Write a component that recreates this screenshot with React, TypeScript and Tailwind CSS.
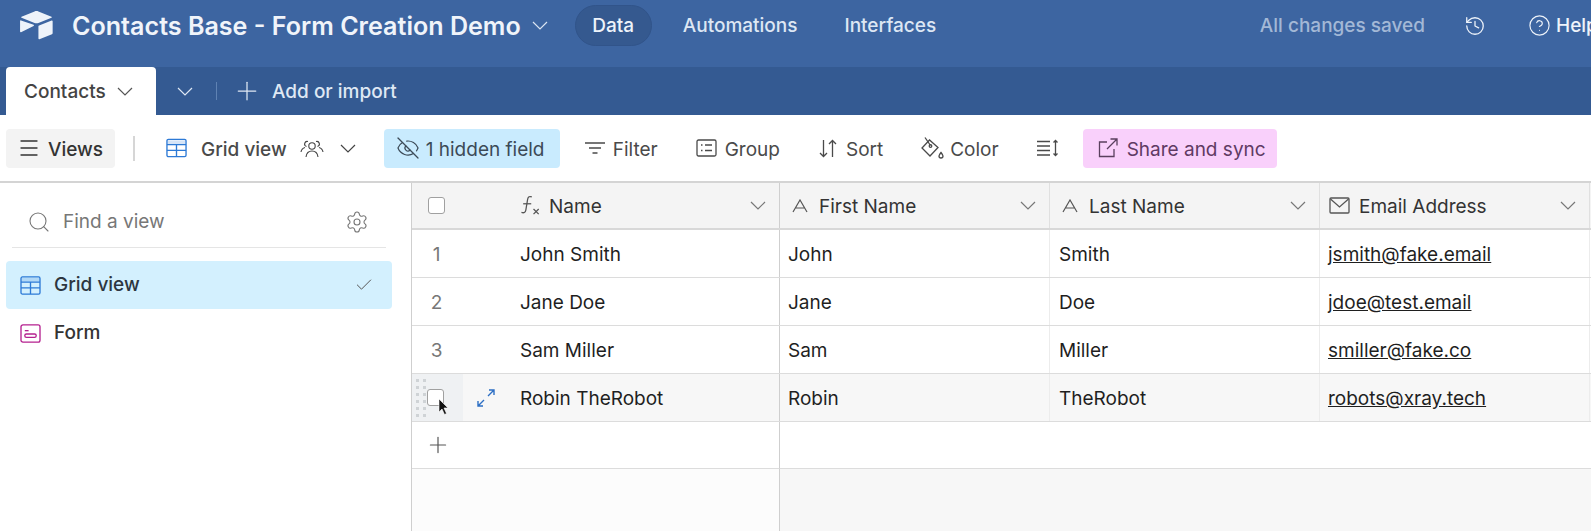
import React from 'react';
import { Plus, Check, Search, Settings, History, CircleHelp, Menu, EyeOff } from 'lucide-react';

const Chev = ({ className }: { className?: string }) => (
  <svg viewBox="0 0 16 9" className={`w-[16px] h-[9px] shrink-0 ${className ?? ''}`} fill="none" stroke="currentColor" strokeWidth="1.2">
    <path d="M1 1l7 7 7-7" />
  </svg>
);

const GridIcon = ({ className }: { className?: string }) => (
  <svg viewBox="0 0 22 20" className={className} fill="none" stroke="currentColor" strokeWidth="1.4">
    <rect x="1" y="1" width="20" height="18" rx="1.5" />
    <path d="M1 6.500h20M1 12.500h20M11 6.500V19" />
    <path d="M1.500 2h19v4h-19z" fill="currentColor" fillOpacity=".2" stroke="none" />
  </svg>
);

const FormIcon = () => (
  <svg viewBox="0 0 22 20" className="w-[21px] h-[19px] text-[#b5208f]" fill="none" stroke="currentColor" strokeWidth="1.4">
    <rect x="1" y="1" width="20" height="18" rx="2" />
    <path d="M5 7h4" />
    <rect x="5" y="10.500" width="12" height="3.500" rx="1.700" />
  </svg>
);

const PeopleIcon = () => (
  <svg viewBox="0 0 24 20" className="w-[24px] h-[20px] text-[#444]" fill="none" stroke="currentColor" strokeWidth="1.1">
    <circle cx="12" cy="8" r="3.200" />
    <path d="M6 19c.5-4 3-6 6-6s5.500 2 6 6" />
    <path d="M8 3.500a2.600 2.600 0 1 0-1.500 5M1 14c.4-2.500 2-4 4-4.500" />
    <path d="M16 3.500a2.600 2.600 0 1 1 1.500 5M23 14c-.4-2.500-2-4-4-4.500" />
  </svg>
);

const FilterIcon = () => (
  <svg viewBox="0 0 22 14" className="w-[22px] h-[14px]" fill="none" stroke="currentColor" strokeWidth="1.3">
    <path d="M1 2h20M5 7h12M8.500 12h5" />
  </svg>
);

const GroupIcon = () => (
  <svg viewBox="0 0 21 18" className="w-[21px] h-[18px]" fill="none" stroke="currentColor" strokeWidth="1.3">
    <rect x="1" y="1" width="19" height="16" rx="1.500" />
    <path d="M5 6h1.500M9 6h7M5 11.500h1.500M9 11.500h7" />
  </svg>
);

const SortIcon = () => (
  <svg viewBox="0 0 18 19" className="w-[18px] h-[19px]" fill="none" stroke="currentColor" strokeWidth="1.3">
    <path d="M4.500 1v16.500M1 14l3.500 3.500L8 14" />
    <path d="M13.500 18V1.500M10 5l3.500-3.500L17 5" />
  </svg>
);

const ColorIcon = () => (
  <svg viewBox="0 0 24 24" className="w-[24px] h-[24px]" fill="none" stroke="currentColor" strokeWidth="1.3">
    <path d="M9.500 4 2 12l8 8 8-8.500z" />
    <path d="M5 1.500l5.500 8" />
    <circle cx="10.500" cy="10" r="1.300" />
    <path d="M21 16.500c1.500 1.900 2 2.600 2 3.500a2 2 0 0 1-4 0c0-.9.500-1.600 2-3.500z" />
  </svg>
);

const RowHeightIcon = () => (
  <svg viewBox="0 0 23 18" className="w-[23px] h-[18px]" fill="none" stroke="currentColor" strokeWidth="1.3">
    <path d="M1 2.500h13M1 7h13M1 11.500h13M1 16h13" />
    <path d="M19.500 1.500v15M17.500 3.500l2-2 2 2M17.500 14.500l2 2 2-2" />
  </svg>
);

const ShareIcon = () => (
  <svg viewBox="0 0 20 20" className="w-[20px] h-[20px] text-[#5a3f5e]" fill="none" stroke="currentColor" strokeWidth="1.3">
    <path d="M9 4H1.500v14.500H16V11" />
    <path d="M9 11 19 1M12.500 1H19v6.500" />
  </svg>
);

const TextIcon = () => (
  <svg viewBox="0 0 16 14" className="w-[16px] h-[14px] ml-[3px] text-[#555]" fill="none" stroke="currentColor" strokeWidth="1.2">
    <path d="M1 13 8 1l7 12M3.500 9h9" />
  </svg>
);

const MailIcon = () => (
  <svg viewBox="0 0 21 17" className="w-[21px] h-[17px] text-[#555]" fill="none" stroke="currentColor" strokeWidth="1.3">
    <rect x="1" y="1" width="19" height="15" rx="1" />
    <path d="M1.500 2l9 8 9-8" />
  </svg>
);

const FormulaIcon = () => (
  <svg viewBox="0 0 20 20" className="w-[23px] h-[23px] text-[#555]" fill="none" stroke="currentColor" strokeWidth="1.1">
    <path d="M12 2.500c-2-.8-3.200 0-3.600 2L6.800 14c-.4 2-1.600 2.800-3.800 2" />
    <path d="M4.500 8.500h7" />
    <path d="M13.500 13l4.500 4.500M18 13l-4.500 4.500" strokeWidth="1.100" />
  </svg>
);

const ExpandIcon = () => (
  <svg viewBox="0 0 18 18" className="w-[18px] h-[18px] text-[#2d6fc4]" fill="none" stroke="currentColor" strokeWidth="1.4">
    <path d="M11 7l6-6M12 1h5v5M7 11l-6 6M1 12v5h5" />
  </svg>
);

const Cursor = () => (
  <svg viewBox="0 0 12 18" className="absolute left-[26px] top-[24px] w-[12px] h-[18px]">
    <path d="M1 1v13l3-3 2.500 5.500 2-1L6 10h4z" fill="#111" stroke="#fff" strokeWidth=".6" />
  </svg>
);

const Logo = () => (
  <svg viewBox="0 0 34 30" className="w-[33px] h-[29px] text-[#eef3fa]" fill="currentColor">
    <path d="M15 .500 1.500 6c-.5.200-.5.900 0 1.100L15 12.400c1.300.5 2.700.5 4 0l13.500-5.300c.5-.2.500-.9 0-1.100L19 .500c-1.300-.5-2.700-.5-4 0z" />
    <path d="M19 15v13.500c0 .5.500.8 1 .6l13-5c.4-.2.700-.5.700-1V10.500c0-.5-.5-.8-1-.6l-13 5c-.4.200-.7.500-.7 1z" />
    <path d="M0 10.500v10.800c0 .5.600.8 1 .6l13-6.500c.5-.3.500-1 0-1.200L1 9.700c-.5-.2-1 .2-1 .8z" />
  </svg>
);

const ToolbarButton = ({ icon, label, className }: { icon: React.ReactNode; label: string; className: string }) => (
  <div className={`flex items-center h-[39px] whitespace-nowrap ${className}`}>
    {icon}
    <span className="pt-[4px]">{label}</span>
  </div>
);

const columns = [
  { label: 'First Name', icon: <TextIcon /> },
  { label: 'Last Name', icon: <TextIcon /> },
  { label: 'Email Address', icon: <MailIcon /> },
];

const rows = [
  { id: 1, name: 'John Smith', first: 'John', last: 'Smith', email: 'jsmith@fake.email' },
  { id: 2, name: 'Jane Doe', first: 'Jane', last: 'Doe', email: 'jdoe@test.email' },
  { id: 3, name: 'Sam Miller', first: 'Sam', last: 'Miller', email: 'smiller@fake.co' },
  { id: 4, name: 'Robin TheRobot', first: 'Robin', last: 'TheRobot', email: 'robots@xray.tech' },
];

const GripDots = () => (
  <div className="grid grid-cols-2 gap-x-[4px] gap-y-[4px] w-[10px] ml-[4px]">
    {Array.from({ length: 12 }).map((_, i) => (
      <span key={i} className="w-[3px] h-[3px] bg-[#cfd3d6]" />
    ))}
  </div>
);

export default function App() {
  return (
    <div className="w-[1591px] h-[531px] overflow-hidden bg-white text-[#333] font-['Inter',sans-serif] text-[19px] flex flex-col">
      {/* top bar */}
      <div className="h-[67px] shrink-0 bg-[#3d65a1] flex items-center pl-[20px] pb-[16px] text-white">
        <Logo />
        <span className="ml-[19px] pt-[2px] text-[25.1px] font-semibold text-[#f0f4fa] whitespace-nowrap">Contacts Base - Form Creation Demo</span>
        <Chev className="ml-[11px] text-[#dbe5f2]" />
        <div className="ml-[27px] h-[41px] w-[77px] pt-[2px] rounded-full bg-[#35598f] border border-[#31548a] flex items-center justify-center text-[#eef3fa] font-medium">Data</div>
        <span className="ml-[31px] pt-[2px] text-[#dde7f4] font-medium">Automations</span>
        <span className="ml-[47px] pt-[2px] text-[#dde7f4] font-medium">Interfaces</span>
        <span className="ml-auto pt-[2px] text-[#a3b8d6] font-medium">All changes saved</span>
        <History className="ml-[39px] w-[22px] h-[22px] text-[#eef3fa]" strokeWidth={1.4} />
        <CircleHelp className="ml-[42px] w-[23px] h-[23px] text-[#eef3fa]" strokeWidth={1.2} />
        <span className="ml-[5px] pt-[2px] w-[35px] overflow-hidden text-[#eef3fa] font-medium">Help</span>
      </div>

      {/* table tabs */}
      <div className="h-[48px] shrink-0 bg-[#345a92] flex items-end pl-[6px] text-white">
        <div className="w-[150px] h-[48px] bg-white rounded-t-[4px] flex items-center pl-[18px] text-[#444] font-medium">
          <span className="pt-[2px]">Contacts</span>
          <Chev className="ml-[11px] text-[#555]" />
        </div>
        <div className="h-[48px] flex items-center text-[#dfe8f4]">
          <Chev className="ml-[21px]" />
          <span className="ml-[23px] w-px h-[18px] bg-[#5f82b3]" />
          <Plus className="ml-[15px] w-[30px] h-[30px]" strokeWidth={1} />
          <span className="ml-[10px] pt-[2px] font-medium">Add or import</span>
        </div>
      </div>

      {/* toolbar */}
      <div className="h-[68px] shrink-0 flex items-center pl-[6px] border-b-2 border-[#d4d4d4] text-[#4a4a4a]">
        <div className="flex items-center w-[109px] h-[39px] rounded-[4px] bg-[#f3f3f3] pl-[11px] gap-[7px] font-medium text-[#333]">
          <Menu className="w-[24px] h-[24px]" strokeWidth={1.3} />
          <span className="pt-[4px]">Views</span>
        </div>
        <span className="ml-[18px] w-[2px] h-[25px] bg-[#d6d6d6]" />
        <GridIcon className="ml-[31px] w-[21px] h-[20px] text-[#2d7ad6]" />
        <span className="ml-[14px] pt-[4px] font-medium whitespace-nowrap">Grid view</span>
        <span className="ml-[13px]"><PeopleIcon /></span>
        <Chev className="ml-[16px] text-[#444]" />
        <ToolbarButton
          icon={<EyeOff className="w-[24px] h-[24px] mr-[6px]" strokeWidth={1.2} />}
          label="1 hidden field"
          className="ml-[28px] w-[176px] pl-[12px] rounded-[4px] bg-[#c9ebfe] text-[#3c4a57]"
        />
        <ToolbarButton icon={<span className="mr-[7px]"><FilterIcon /></span>} label="Filter" className="ml-[24px]" />
        <ToolbarButton icon={<span className="mr-[8px]"><GroupIcon /></span>} label="Group" className="ml-[38px]" />
        <ToolbarButton icon={<span className="mr-[9px]"><SortIcon /></span>} label="Sort" className="ml-[39px]" />
        <ToolbarButton icon={<span className="mr-[6px]"><ColorIcon /></span>} label="Color" className="ml-[37px]" />
        <span className="ml-[37px]"><RowHeightIcon /></span>
        <ToolbarButton
          icon={<span className="mr-[9px]"><ShareIcon /></span>}
          label="Share and sync"
          className="ml-[24px] w-[194px] pl-[15px] rounded-[4px] bg-[#f9d0fb] text-[#5f3a63]"
        />
      </div>

      <div className="flex flex-1 min-h-0">
        {/* sidebar */}
        <div className="w-[411px] shrink-0 pl-[6px] pr-[19px]">
          <div className="mx-[6px] h-[65px] pt-[14px] flex items-center border-b border-[#e5e5e5] pl-[15px] pr-[17px] text-[#777]">
            <Search className="w-[24px] h-[24px]" strokeWidth={1.1} />
            <span className="ml-[12px]">Find a view</span>
            <Settings className="ml-auto w-[24px] h-[24px]" strokeWidth={1.1} />
          </div>
          <div className="mt-[13px] h-[48px] rounded-[4px] bg-[#d3f0fe] flex items-center pl-[14px] pr-[18px] font-medium text-[#2d3640]">
            <GridIcon className="w-[21px] h-[19px] text-[#2d7ad6]" />
            <span className="ml-[13px]">Grid view</span>
            <Check className="ml-auto w-[20px] h-[20px] text-[#555]" strokeWidth={1.2} />
          </div>
          <div className="h-[48px] flex items-center pl-[14px] font-medium">
            <FormIcon />
            <span className="ml-[13px]">Form</span>
          </div>
        </div>

        {/* grid */}
        <div className="flex-1 flex flex-col border-l border-[#cfcfcf] text-[#1f1f1f] min-w-0">
          <div className="h-[47px] shrink-0 flex bg-[#f4f4f4] border-b-2 border-[#d8d8d8]">
            <div className="w-[368px] shrink-0 flex items-center border-r border-[#cfcfcf]">
              <span className="ml-[16px] w-[17px] h-[17px] rounded-[3px] border border-[#a0a0a0] bg-white" />
              <span className="ml-[73px]"><FormulaIcon /></span>
              <span className="ml-[8px] pt-[4px] text-[#333]">Name</span>
              <Chev className="ml-auto mr-[13px] text-[#777]" />
            </div>
            {columns.map((col) => (
              <div key={col.label} className="w-[270px] shrink-0 flex items-center border-r border-[#e0e0e0] pl-[9px]">
                <span className="w-[30px] shrink-0 flex items-center">{col.icon}</span>
                <span className="pt-[4px] text-[#333]">{col.label}</span>
                <Chev className="ml-auto mr-[13px] text-[#777]" />
              </div>
            ))}
          </div>

          {rows.map((row) => {
            const hovered = row.id === 4;
            return (
              <div key={row.id} className={`h-[48px] shrink-0 flex border-b border-[#dcdcdc] ${hovered ? 'bg-[#f7f7f7]' : ''}`}>
                <div className="w-[368px] shrink-0 flex items-center border-r border-[#cfcfcf]">
                  <div className="relative w-[51px] h-full flex items-center">
                    {hovered ? (
                      <div className="relative w-[51px] h-full flex items-center bg-[#eff1f3]">
                        <GripDots />
                        <span className="ml-[1px] w-[17px] h-[17px] rounded-[3px] border border-[#a0a0a0] bg-white" />
                        <Cursor />
                      </div>
                    ) : (
                      <span className="w-[51px] pt-[4px] text-center text-[#777] pr-[2px]">{row.id}</span>
                    )}
                  </div>
                  <div className="w-[57px] pl-[14px]">{hovered && <ExpandIcon />}</div>
                  <span className="pt-[4px]">{row.name}</span>
                </div>
                <div className="w-[270px] shrink-0 flex items-center border-r border-[#ececec] pt-[4px] pl-[8px]">{row.first}</div>
                <div className="w-[270px] shrink-0 flex items-center border-r border-[#ececec] pt-[4px] pl-[9px]">{row.last}</div>
                <div className="w-[270px] shrink-0 flex items-center border-r border-[#ececec] pt-[4px] pl-[8px]">
                  <span className="underline">{row.email}</span>
                </div>
              </div>
            );
          })}

          <div className="h-[47px] shrink-0 flex">
            <div className="w-[368px] shrink-0 flex items-center border-r border-b border-b-[#dcdcdc] border-r-[#cfcfcf] pl-[13px]">
              <Plus className="w-[26px] h-[26px] text-[#555]" strokeWidth={1.1} />
            </div>
            <div className="flex-1 border-b border-[#dcdcdc]" />
          </div>

          <div className="flex-1 flex bg-[#f7f7f7]">
            <div className="w-[368px] shrink-0 bg-[#fcfcfc] border-r border-[#cfcfcf]" />
          </div>
        </div>
      </div>
    </div>
  );
}
